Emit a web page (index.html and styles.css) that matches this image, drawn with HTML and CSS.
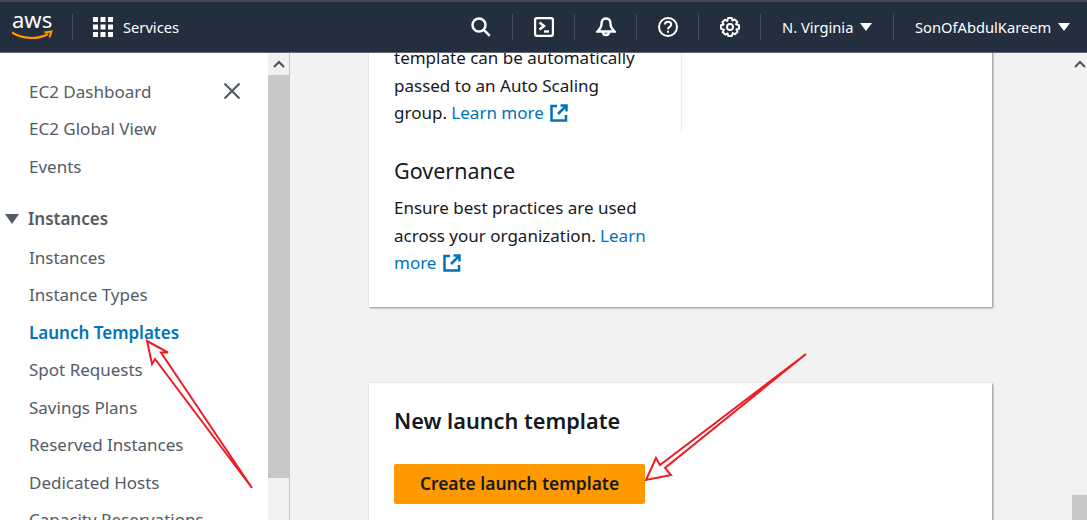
FILE: index.html
```html
<!DOCTYPE html>
<html>
<head>
    <meta charset="utf-8">
    <meta content="width=device-width, initial-scale=1" name="viewport">
    <title>Launch Templates</title>
    <link rel="stylesheet" href="styles.css">
</head>
<body>
<div class="page">
    <header class="nav">
        <div class="brand">
            <svg class="aws-logo" viewBox="0 0 44 28" width="44" height="28">
                <text class="aws-word" x="0" y="15">aws</text>
                <path d="M0 19.500 C10 26 26 27 36 21" fill="none" stroke="#f90" stroke-width="2.200"/>
                <path d="M32.500 19.500 L39.500 18.500 L37.500 24.500" fill="none" stroke="#f90" stroke-width="2"/>
            </svg>
        </div>
        <div class="services">
            <svg viewBox="0 0 20 20" width="20" height="20" fill="#fff">
                <rect x="0" y="0" width="5" height="5"/><rect x="7.500" y="0" width="5" height="5"/><rect x="15" y="0" width="5" height="5"/>
                <rect x="0" y="7.500" width="5" height="5"/><rect x="7.500" y="7.500" width="5" height="5"/><rect x="15" y="7.500" width="5" height="5"/>
                <rect x="0" y="15" width="5" height="5"/><rect x="7.500" y="15" width="5" height="5"/><rect x="15" y="15" width="5" height="5"/>
            </svg>
            <span>Services</span>
        </div>
        <div class="nav-icon no-line">
            <svg viewBox="0 0 20 20" width="20" height="20" fill="none" stroke="#fff" stroke-width="2.500">
                <circle cx="8" cy="8" r="6.500"/><path d="M12.800 12.800 L18.800 18.800"/>
            </svg>
        </div>
        <div class="nav-icon">
            <svg viewBox="0 0 20 20" width="20" height="20" fill="none" stroke="#fff" stroke-width="2.400">
                <rect x="1" y="1" width="18" height="18" rx="2.500"/><path d="M5.500 5.500 L10 9 L5.500 12.500"/><path d="M10 14.500 H15"/>
            </svg>
        </div>
        <div class="nav-icon">
            <svg viewBox="0 0 20 20" width="20" height="20" fill="none" stroke="#fff" stroke-width="2.400">
                <path d="M10 1.500 C6.500 1.500 5.500 4 5.500 7 C5.500 10 4 12 1.500 14.500 H18.500 C16 12 14.500 10 14.500 7 C14.500 4 13.500 1.500 10 1.500 Z"/>
                <path d="M7 15 C7 19 13 19 13 15"/>
            </svg>
        </div>
        <div class="nav-icon">
            <svg viewBox="0 0 20 20" width="20" height="20" fill="none" stroke="#fff" stroke-width="2">
                <circle cx="10" cy="10" r="9"/>
                <path d="M7 7.500 C7 3.800 13.200 3.800 13.200 7.500 C13.200 10 10 9.800 10 12.300"/>
                <path d="M10 13.800 V15.800"/>
            </svg>
        </div>
        <div class="nav-icon">
            <svg viewBox="0 0 20 20" width="20" height="20" fill="none" stroke="#fff" stroke-width="2" stroke-linejoin="round">
                <circle cx="10" cy="10" r="3"/>
                <path d="M8.200 1 H11.800 L12.400 3.600 L14.700 2.400 L17.300 5 L16 7.200 L19 8.200 V11.800 L16.400 12.400 L17.600 14.700 L15 17.300 L12.800 16 L11.800 19 H8.200 L7.600 16.400 L5.300 17.600 L2.700 15 L4 12.800 L1 11.800 V8.200 L3.600 7.600 L2.400 5.300 L5 2.700 L7.200 4 Z"/>
            </svg>
        </div>
        <div class="nav-menu region">N. Virginia <i class="caret"></i></div>
        <div class="nav-menu">SonOfAbdulKareem <i class="caret"></i></div>
    </header>

    <div class="body">
        <aside class="side">
            <ul class="side-list">
                <li class="side-first">EC2 Dashboard
                    <svg viewBox="0 0 16 16" width="16" height="16" fill="none" stroke="#545b64" stroke-width="2.200"><path d="M0.500 0.500 L15.500 15.500 M15.500 0.500 L0.500 15.500"/></svg>
                </li>
                <li>EC2 Global View</li>
                <li>Events</li>
                <li class="side-head"><i class="side-caret"></i>Instances</li>
                <li>Instances</li>
                <li>Instance Types</li>
                <li class="active">Launch Templates</li>
                <li>Spot Requests</li>
                <li>Savings Plans</li>
                <li>Reserved Instances</li>
                <li>Dedicated Hosts</li>
                <li>Capacity Reservations</li>
            </ul>
        </aside>
        <div class="bar side-bar">
            <div class="bar-btn"><svg viewBox="0 0 12 8" width="12" height="8" fill="none" stroke="#505050" stroke-width="2"><path d="M1 7 L6 2 L11 7"/></svg></div>
            <div class="bar-thumb"></div>
        </div>

        <main class="main">
            <section class="card card-top">
                <div class="card-col">
                    <p>template can be automatically passed to an Auto Scaling group. <a>Learn more <svg class="ext" viewBox="0 0 18 18" width="18" height="18" fill="none" stroke="#0073bb" stroke-width="2.500"><path d="M7 2 H1.500 V16.500 H16 V11"/><path d="M10.500 1.500 H16.500 V7.500"/><path d="M16 2 L8 10"/></svg></a></p>
                </div>
                <div class="card-col2">
                    <h2>Governance</h2>
                    <p>Ensure best practices are used across your organization. <a>Learn more <svg class="ext" viewBox="0 0 18 18" width="18" height="18" fill="none" stroke="#0073bb" stroke-width="2.500"><path d="M7 2 H1.500 V16.500 H16 V11"/><path d="M10.500 1.500 H16.500 V7.500"/><path d="M16 2 L8 10"/></svg></a></p>
                </div>
            </section>
            <section class="card card-new">
                <h2 class="new-title">New launch template</h2>
                <button class="btn">Create launch template</button>
            </section>
        </main>

        <div class="bar main-bar">
            <div class="bar-btn"><svg viewBox="0 0 12 8" width="12" height="8" fill="none" stroke="#505050" stroke-width="2"><path d="M1 7 L6 2 L11 7"/></svg></div>
            <div class="bar-thumb"></div>
        </div>
    </div>

    <!-- red arrows drawn over the screenshot -->
    <svg class="arrows" viewBox="0 0 1087 520" width="1087" height="520" fill="#fff" stroke="#ee1c25" stroke-width="2">
        <path d="M147 341 L168 352.500 L161 352.500 L252 488 L155 359 L152 364 Z"/>
        <path d="M646 480 L656 458 L660 465 L806 354 L665 468 L671 475 Z"/>
    </svg>
</div>
</body>
</html>
```

FILE: styles.css
```css
* {
    box-sizing: border-box;
}

html, body {
    margin: 0;
    height: 100%;
    overflow: hidden;
}

body {
    font-family: "Noto Sans", "Liberation Sans", sans-serif;
    font-size: 17px;
    color: #16191f;
}

.page {
    position: relative;
    display: flex;
    flex-direction: column;
    width: 1087px;
    height: 520px;
    background-color: #f2f2f2;
}

/* top bar */
.nav {
    display: flex;
    align-items: center;
    height: 53px;
    flex: none;
    background-color: #232f3e;
    border-top: 2px solid #4b4650;
    border-bottom: 1px solid #5f6873;
    color: #fff;
    font-size: 14.700px;
}

.brand {
    display: flex;
    align-items: center;
    width: 73px;
    height: 26px;
    padding-left: 12px;
    border-right: 1px solid #414d5c;
}

.aws-word {
    font-size: 22px;
    fill: #fff;
}

.services {
    display: flex;
    align-items: center;
    gap: 10px;
    width: 377px;
    padding-left: 20px;
}

.nav-icon {
    display: flex;
    align-items: center;
    justify-content: center;
    width: 62px;
    height: 26px;
    border-left: 1px solid #414d5c;
}

.nav-icon.no-line {
    border-left: 0;
}

.nav-menu {
    display: flex;
    align-items: center;
    gap: 7px;
    height: 26px;
    padding-left: 21px;
    border-left: 1px solid #414d5c;
    white-space: nowrap;
}

.region {
    width: 133px;
}

.caret {
    width: 0;
    height: 0;
    border-left: 6px solid transparent;
    border-right: 6px solid transparent;
    border-top: 8px solid #fff;
}

/* page below the bar */
.body {
    display: flex;
    flex: 1;
    min-height: 0;
}

.side {
    width: 268px;
    flex: none;
    background-color: #fff;
    overflow: hidden;
}

.side-list {
    margin: 0;
    padding: 19.500px 0 0 29px;
    list-style: none;
    color: #545b64;
}

.side-list li {
    display: flex;
    align-items: center;
    justify-content: space-between;
    height: 37.500px;
    white-space: nowrap;
}

.side-first {
    padding-right: 28px;
}

.side-list .side-head {
    justify-content: flex-start;
    margin: 15px 0 1px -24px;
    font-weight: 600;
}

.side-caret {
    width: 0;
    height: 0;
    margin-right: 9px;
    border-left: 7px solid transparent;
    border-right: 7px solid transparent;
    border-top: 10px solid #545b64;
}

.side-list .active {
    color: #0073bb;
    font-weight: 600;
}

.bar {
    display: flex;
    flex-direction: column;
    flex: none;
    background-color: #f1f1f1;
}

.bar-btn {
    display: flex;
    align-items: center;
    justify-content: center;
    height: 22px;
    flex: none;
}

.bar-thumb {
    background-color: #c8c8c8;
}

.side-bar {
    width: 22px;
    border-right: 1px solid #c6c9cb;
}

.side-bar .bar-thumb {
    height: 403px;
}

.main-bar {
    width: 15px;
    background-color: #f2f2f2;
}

.main-bar .bar-thumb {
    height: 25px;
    margin-top: auto;
}

.main {
    flex: 1;
    min-width: 0;
    overflow: hidden;
    padding-left: 79px;
}

/* cards */
.card {
    width: 623px;
    padding-left: 25px;
    background-color: #fff;
    box-shadow: 1px 1px 2px 0 rgba(0, 28, 36, 0.45), 0 0 1px 0 rgba(0, 28, 36, 0.12);
}

.card p {
    margin: 0;
    line-height: 27.500px;
}

.card a {
    color: #0073bb;
}

.ext {
    margin-left: 2px;
    vertical-align: -3px;
}

.card-top {
    height: 263px;
    margin-top: -9px;
}

.card-col {
    width: 288px;
    height: 88px;
    padding-right: 35px;
    border-right: 1px solid #eaeded;
}

.card-col2 {
    width: 262px;
}

.card-col2 h2 {
    margin: 23px 0 7px;
    font-size: 21.500px;
    font-weight: 400;
    line-height: 32px;
}

.card-new {
    height: 200px;
    margin-top: 76px;
    padding-top: 22px;
}

.new-title {
    margin: 0 0 27px;
    font-size: 21.700px;
    font-weight: 600;
    line-height: 32px;
}

.btn {
    display: block;
    width: 251px;
    height: 40px;
    padding: 0 0 2px;
    border: 0;
    border-radius: 2px;
    background-color: #f90;
    color: #16191f;
    font-family: inherit;
    font-size: 17.400px;
    font-weight: 600;
}

.arrows {
    position: absolute;
    top: 0;
    left: 0;
    pointer-events: none;
}
```
